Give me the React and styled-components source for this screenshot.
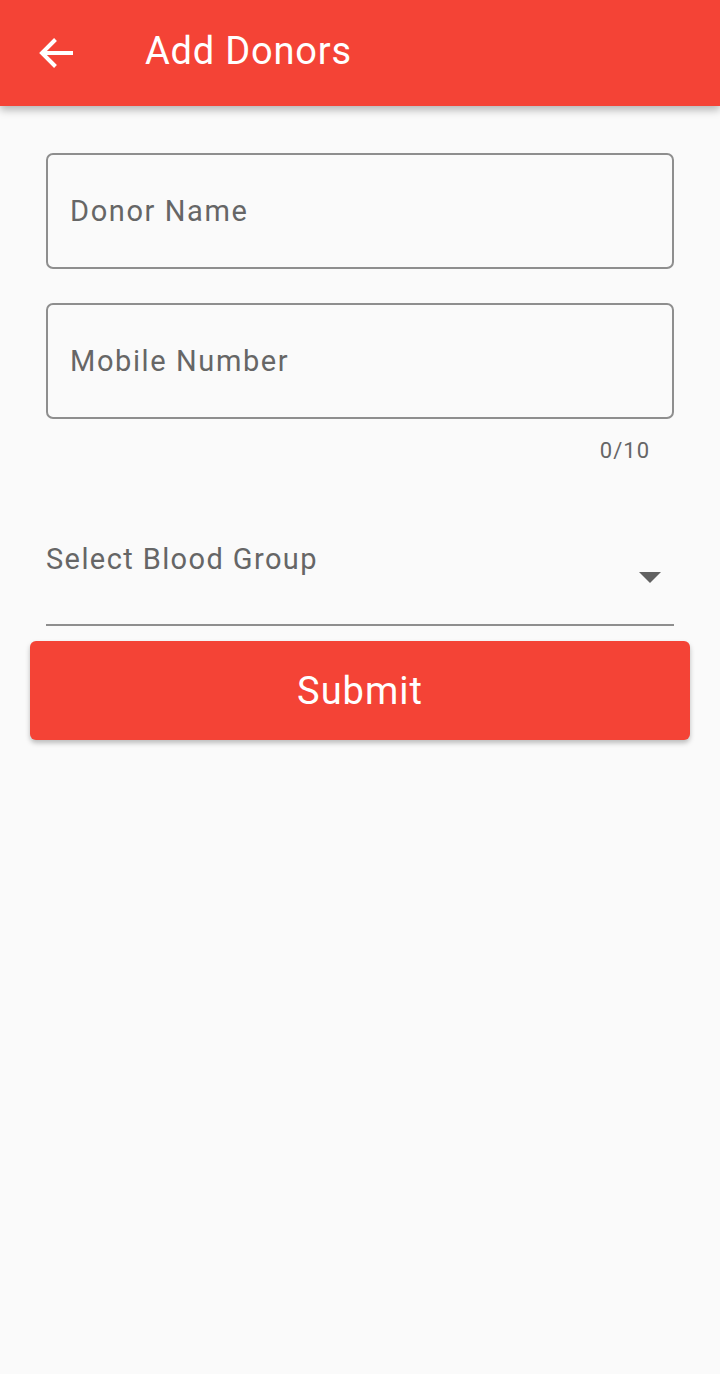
import React from 'react';
import styled, { createGlobalStyle } from 'styled-components';

const GlobalStyle = createGlobalStyle`
  html, body {
    margin: 0;
    padding: 0;
    background: #fafafa;
    font-family: Roboto, "Liberation Sans", sans-serif;
  }
`;

const Screen = styled.div`
  width: 720px;
  min-height: 1374px;
  background: #fafafa;
`;

const AppBar = styled.header`
  height: 106px;
  background: #f44336;
  display: flex;
  align-items: center;
  box-shadow: 0 4px 8px rgba(0, 0, 0, 0.28);
  position: relative;
  z-index: 1;
`;

const BackButton = styled.button`
  width: 112px;
  height: 106px;
  border: 0;
  background: transparent;
  display: flex;
  align-items: center;
  padding: 0 0 0 38px;
  color: #fff;
`;

const Title = styled.h1`
  margin: 0 0 4px 33px;
  color: #fff;
  font-size: 38px;
  font-weight: 400;
  letter-spacing: 0.8px;
`;

const Form = styled.form`
  display: flex;
  flex-direction: column;
  padding: 47px 46px 0;
`;

const OutlinedField = styled.div`
  height: 116px;
  box-sizing: border-box;
  border: 2px solid #8e8e8e;
  border-radius: 7px;
  display: flex;
  align-items: center;
  padding: 0 22px;
  margin-bottom: ${({ $gap }) => $gap}px;
`;

const Placeholder = styled.span`
  font-size: 29px;
  color: #666;
  letter-spacing: 1.6px;
`;

const Counter = styled.div`
  align-self: flex-end;
  margin: 19px 24px 0 0;
  font-size: 22px;
  color: #666;
  letter-spacing: 1px;
`;

const Select = styled.div`
  margin-top: 57px;
  height: 106px;
  box-sizing: border-box;
  border-bottom: 2px solid #8e8e8e;
  display: flex;
  justify-content: space-between;
`;

const SelectLabel = styled.span`
  font-size: 29px;
  color: #666;
  letter-spacing: 1.4px;
  padding-top: 22px;
`;

const Caret = styled.span`
  width: 0;
  height: 0;
  border-left: 11px solid transparent;
  border-right: 11px solid transparent;
  border-top: 11px solid #616161;
  margin: 52px 13px 0 0;
`;

const SubmitButton = styled.button`
  margin: 15px -16px 0;
  height: 99px;
  border: 0;
  border-radius: 6px;
  background: #f44336;
  color: #fff;
  font-family: Roboto, "Liberation Sans", sans-serif;
  font-size: 38px;
  font-weight: 400;
  letter-spacing: 1px;
  box-shadow: 0 3px 5px rgba(0, 0, 0, 0.25);
`;

const ArrowIcon = () => (
  <svg width="36" height="32" viewBox="0 0 36 32" fill="none" stroke="#fff" strokeWidth="4">
    <path d="M35 16H4" />
    <path d="M17.5 2.5L4 16l13.5 13.5" />
  </svg>
);

export default function App() {
  return (
    <>
      <GlobalStyle />
      <Screen>
        <AppBar>
          <BackButton type="button" aria-label="Back">
            <ArrowIcon />
          </BackButton>
          <Title>Add Donors</Title>
        </AppBar>
        <Form>
          <OutlinedField $gap={34}>
            <Placeholder>Donor Name</Placeholder>
          </OutlinedField>
          <OutlinedField $gap={0}>
            <Placeholder>Mobile Number</Placeholder>
          </OutlinedField>
          <Counter>0/10</Counter>
          <Select>
            <SelectLabel>Select Blood Group</SelectLabel>
            <Caret />
          </Select>
          <SubmitButton type="button">Submit</SubmitButton>
        </Form>
      </Screen>
    </>
  );
}
